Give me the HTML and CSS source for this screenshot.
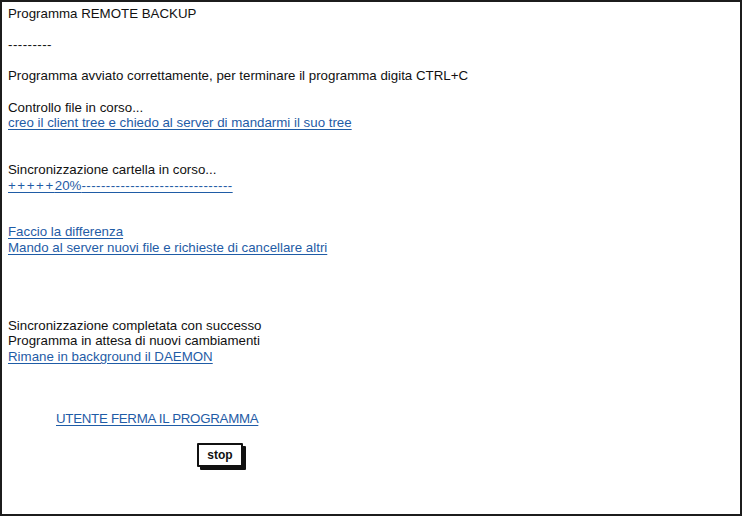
FILE: index.html
```html
<!DOCTYPE html>
<html>
<head>
<meta charset="utf-8">
<link rel="stylesheet" href="styles.css">
</head>
<body>
<div class="frame">
  <div class="log">
    <div class="line">Programma REMOTE BACKUP</div>
    <div class="line"></div>
    <div class="line"><span class="dashes">---------</span></div>
    <div class="line"></div>
    <div class="line">Programma avviato correttamente, per terminare il programma digita CTRL+C</div>
    <div class="line"></div>
    <div class="line">Controllo file in corso...</div>
    <div class="line"><span class="link">creo il client tree e chiedo al server di mandarmi il suo tree</span></div>
    <div class="line"></div>
    <div class="line"></div>
    <div class="line">Sincronizzazione cartella in corso...</div>
    <div class="line"><span class="link"><span class="plus">+++++</span>20%<span class="dashes">-------------------------------</span></span></div>
    <div class="line"></div>
    <div class="line"></div>
    <div class="line"><span class="link">Faccio la differenza</span></div>
    <div class="line"><span class="link">Mando al server nuovi file e richieste di cancellare altri</span></div>
    <div class="line"></div>
    <div class="line"></div>
    <div class="line"></div>
    <div class="line"></div>
    <div class="line">Sincronizzazione completata con successo</div>
    <div class="line">Programma in attesa di nuovi cambiamenti</div>
    <div class="line"><span class="link">Rimane in background il DAEMON</span></div>
    <div class="line"></div>
    <div class="line"></div>
    <div class="line"></div>
    <div class="line indent"><span class="link caps">UTENTE FERMA IL PROGRAMMA</span></div>
  </div>
  <div class="actions">
    <button class="stop">stop</button>
  </div>
</div>
</body>
</html>
```

FILE: styles.css
```css
html, body {
  margin: 0;
  padding: 0;
  background: #ffffff;
}

.frame {
  box-sizing: border-box;
  width: 742px;
  height: 516px;
  border: 2px solid #1c1c1c;
  padding: 4px 0 0 6px;
  font-family: "Liberation Sans", Arial, sans-serif;
  font-size: 13.3px;
  color: #111111;
}

.log {
  display: flex;
  flex-direction: column;
}

.line {
  height: 15.6px;
  line-height: 15.6px;
  white-space: nowrap;
}

.link {
  color: #1f5ca6;
  text-decoration: underline;
  text-underline-offset: 2px;
}

.caps {
  letter-spacing: -0.28px;
}

.dashes {
  letter-spacing: 0.45px;
}

.plus {
  letter-spacing: 1.6px;
}

.indent {
  padding-left: 48px;
}

.actions {
  padding: 16px 0 0 189px;
}

.stop {
  box-sizing: border-box;
  width: 46px;
  height: 24px;
  border: 2px solid #111111;
  border-radius: 1px;
  background: #ffffff;
  box-shadow: 3px 3px 0 #111111;
  font-family: "Liberation Sans", Arial, sans-serif;
  font-size: 12px;
  font-weight: bold;
  color: #111111;
  padding: 0;
}
```
